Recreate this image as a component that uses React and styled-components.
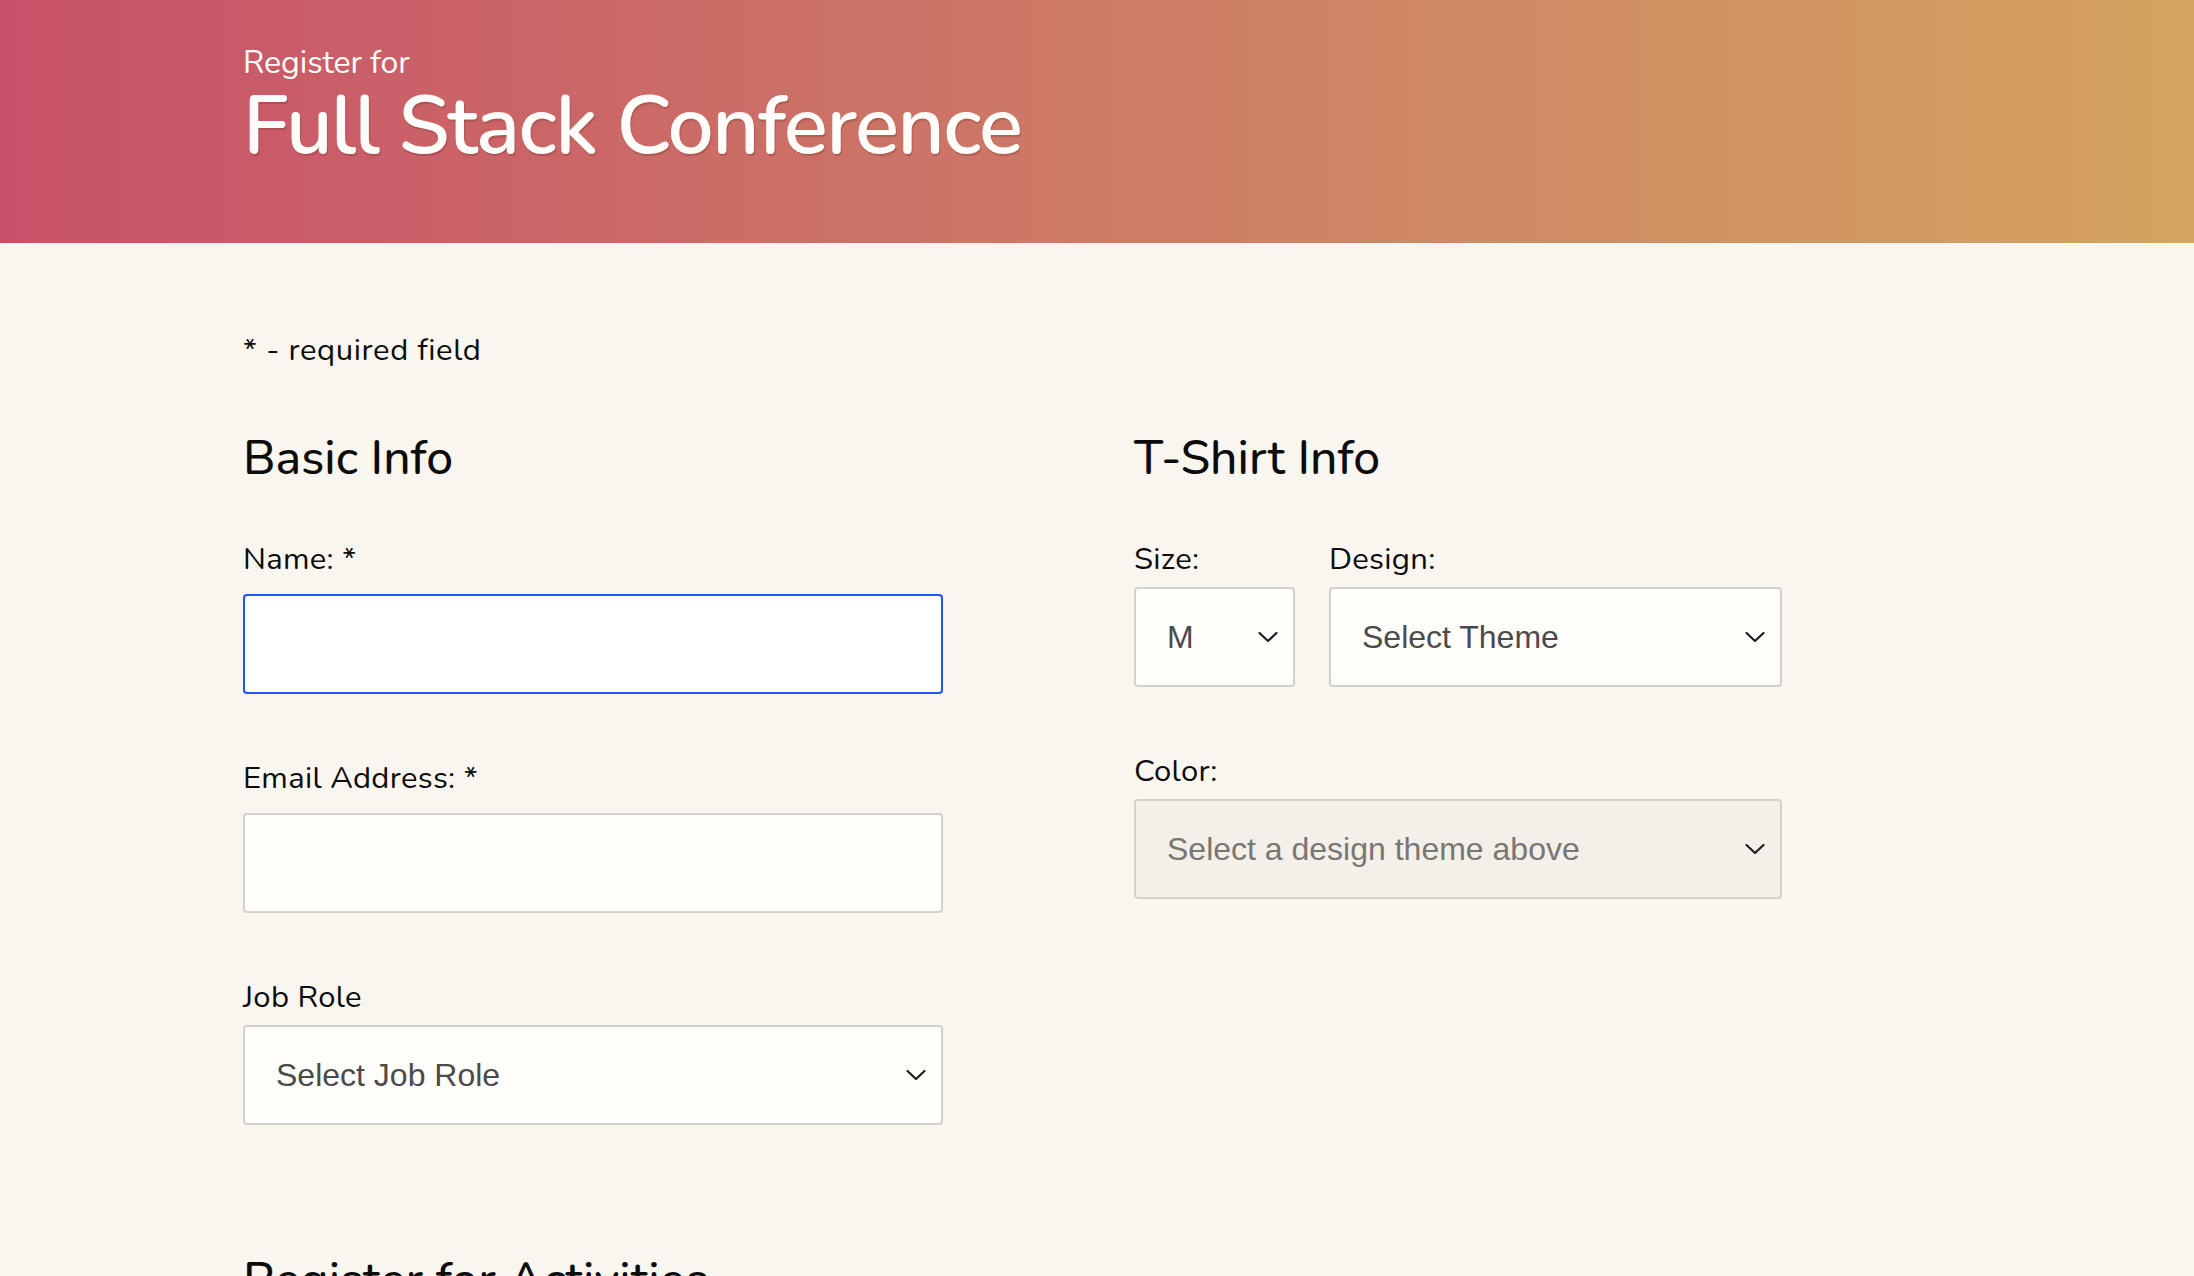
import styled, { createGlobalStyle } from "styled-components";

const GlobalStyle = createGlobalStyle`
  html {
    overflow: hidden;
  }
  body {
    margin: 0;
    background: #f9f5ef;
    font-family: "Nunito", "Lato", "Noto Sans", sans-serif;
    color: #0c0c0c;
  }
  * {
    box-sizing: border-box;
  }
`;

const Chevron = () => (
  <svg width="20" height="11" viewBox="0 0 20 11" fill="none">
    <polyline
      points="1.5,1.5 10,9.5 18.5,1.5"
      stroke="#1e1e1e"
      strokeWidth="2.2"
      strokeLinecap="round"
      strokeLinejoin="round"
    />
  </svg>
);

const Select = ({ value, options, disabled }) => (
  <SelectWrap>
    <SelectInput defaultValue={value} disabled={disabled} $disabled={disabled}>
      {options.map((o) => (
        <option key={o}>{o}</option>
      ))}
    </SelectInput>
    <ChevronBox>
      <Chevron />
    </ChevronBox>
  </SelectWrap>
);

export default function App() {
  return (
    <>
      <GlobalStyle />
      <Header>
        <Kicker>Register for</Kicker>
        <Title>Full Stack Conference</Title>
      </Header>
      <Main>
        <Note>* - required field</Note>
        <Columns>
          <Fieldset>
            <SectionTitle>Basic Info</SectionTitle>
            <Field>
              <Label htmlFor="name">Name: *</Label>
              <TextInput id="name" type="text" $focused />
            </Field>
            <Field>
              <Label htmlFor="email">Email Address: *</Label>
              <TextInput id="email" type="email" />
            </Field>
            <Field>
              <Label>Job Role</Label>
              <Select value="Select Job Role" options={["Select Job Role", "Full Stack JavaScript Developer", "Front End Developer", "Back End Developer", "Student", "Other"]} />
            </Field>
          </Fieldset>

          <Fieldset>
            <SectionTitle>T-Shirt Info</SectionTitle>
            <FieldRow>
              <Field $width="161px">
                <Label>Size:</Label>
                <Select value="M" options={["S", "M", "L", "XL"]} />
              </Field>
              <Field $grow>
                <Label>Design:</Label>
                <Select value="Select Theme" options={["Select Theme", "Theme - JS Puns", "Theme - I ♥ JS"]} />
              </Field>
            </FieldRow>
            <Field>
              <Label>Color:</Label>
              <Select value="Select a design theme above" options={["Select a design theme above"]} disabled />
            </Field>
          </Fieldset>
        </Columns>
        <SectionTitle>Register for Activities</SectionTitle>
      </Main>
    </>
  );
}

const Header = styled.header`
  height: 243px;
  padding: 48px 243px 0;
  background: linear-gradient(to right, #c85169, #cd7b66 50%, #d4a45f);
  color: #fffdf9;
`;

const Kicker = styled.span`
  display: block;
  font-size: 32px;
  line-height: 30px;
`;

const Title = styled.h1`
  margin: 0;
  font-size: 82px;
  line-height: 96px;
  font-weight: 600;
  letter-spacing: -1.5px;
  text-shadow: 1px 2px 1px rgba(90, 30, 30, 0.25);
`;

const Main = styled.main`
  padding: 87px 243px 0;
`;

const Note = styled.p`
  margin: 0 0 58px;
  padding-top: 2px;
  font-size: 31px;
  line-height: 36px;
  letter-spacing: 0.6px;
`;

const Columns = styled.div`
  display: grid;
  grid-template-columns: 700px 648px;
  column-gap: 191px;
  margin-bottom: 60px;
`;

const Fieldset = styled.section`
  display: flex;
  flex-direction: column;
`;

const SectionTitle = styled.h2`
  margin: 0 0 50px;
  padding-top: 4px;
  font-size: 48px;
  line-height: 1.2;
  font-weight: 500;
`;

const FieldRow = styled.div`
  display: flex;
  gap: 34px;
`;

const Field = styled.div`
  display: flex;
  flex-direction: column;
  margin-bottom: 63px;
  width: ${(p) => p.$width || "auto"};
  flex: ${(p) => (p.$grow ? 1 : "none")};
`;

const Label = styled.label`
  padding-top: 3px;
  font-size: 31px;
  line-height: 36px;
  letter-spacing: 0.3px;
  margin-bottom: 10px;
`;

const TextInput = styled.input`
  margin-top: 7px;
  height: 100px;
  width: 100%;
  padding: 0 31px;
  font-family: "Liberation Sans", Arial, sans-serif;
  font-size: 32px;
  border-radius: 4px;
  border: 2px solid ${(p) => (p.$focused ? "#1b55f6" : "#d4d0ca")};
  background: ${(p) => (p.$focused ? "#ffffff" : "#fffdf9")};
  outline: none;
`;

const SelectWrap = styled.div`
  position: relative;
  width: 100%;
`;

const SelectInput = styled.select`
  appearance: none;
  width: 100%;
  height: 100px;
  padding: 0 50px 0 31px;
  font-family: "Liberation Sans", Arial, sans-serif;
  font-size: 32px;
  border-radius: 4px;
  border: 2px solid #d4d0ca;
  color: ${(p) => (p.$disabled ? "#7a7672" : "#4b4b4b")};
  background: ${(p) => (p.$disabled ? "#f3efe9" : "#fffdf9")};
  opacity: 1;
  outline: none;
`;

const ChevronBox = styled.span`
  position: absolute;
  right: 17px;
  top: 50%;
  transform: translateY(-50%);
  display: flex;
  pointer-events: none;
`;
